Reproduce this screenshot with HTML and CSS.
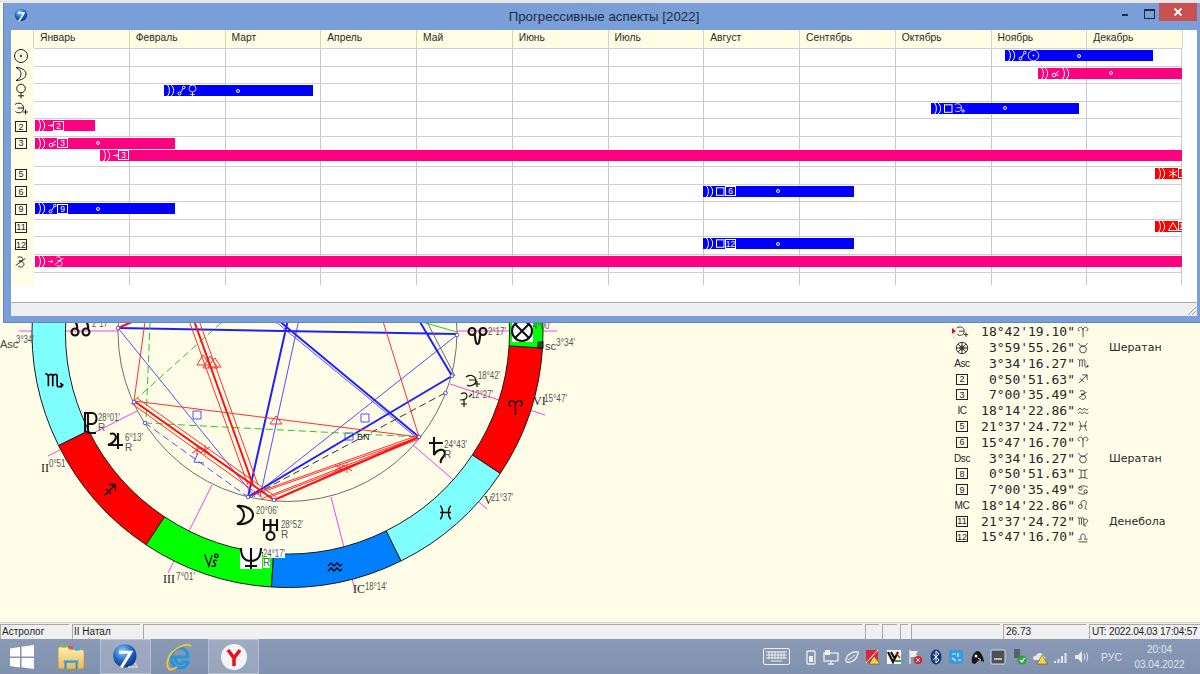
FILE: index.html
```html
<!DOCTYPE html>
<html lang="ru">
<head>
<meta charset="utf-8">
<title>Прогрессивные аспекты</title>
<link rel="stylesheet" href="styles.css">
</head>
<body>
<svg class="defs" aria-hidden="true">
  <defs>
    <radialGradient id="ball" cx="40%" cy="30%" r="75%"><stop offset="0" stop-color="#8fd0ff"/><stop offset=".55" stop-color="#1f66c4"/><stop offset="1" stop-color="#0b2f78"/></radialGradient>
    <linearGradient id="folder" x1="0" y1="0" x2="0" y2="1"><stop offset="0" stop-color="#fff0b0"/><stop offset="1" stop-color="#e8b85a"/></linearGradient>
    <symbol id="sun" viewBox="0 0 16 16"><circle cx="8" cy="8" r="6.5"/><circle cx="8" cy="8" r=".8" class="solid"/></symbol>
    <symbol id="moon" viewBox="0 0 16 16"><path d="M3 1.5C9 1.5 13 4.500 13 8C13 11.500 9 14.500 3 14.500C6.500 13 8 10.500 8 8C8 5.500 6.500 3 3 1.500Z"/></symbol>
    <symbol id="venus" viewBox="0 0 16 16"><circle cx="8" cy="5.500" r="4.300"/><path d="M8 9.800V15.500M5 12.800H11"/></symbol>
    <symbol id="fort" viewBox="0 0 16 16"><path d="M2 3.500C5 1 10.500 2 10.500 7C10.500 12 5 13 2.500 10.500M4.500 7H10.500M12.500 8.500V13.500M10 11H15"/></symbol>
    <symbol id="lil" viewBox="0 0 16 16"><path d="M4 3C6 1.500 9.500 2 10 4C10 6 7.500 7 5.500 7C9.500 7 12.500 9 11 12C9.500 14.500 6 14 4.500 12.500M2 12L13 4"/></symbol>
    <symbol id="wheel" viewBox="0 0 16 16"><circle cx="8" cy="8" r="6.500"/><circle cx="8" cy="8" r="2.500"/><path d="M8 1.500V14.500M1.500 8H14.500M3.500 3.500L12.500 12.500M12.500 3.500L3.500 12.500"/></symbol>
    <symbol id="aries" viewBox="0 0 16 16"><path d="M8 15V6C8 3 6 1.500 4.500 1.500C3 1.500 1.500 2.800 1.500 4.500C1.500 6 3 6.800 4 6M8 6C8 3 10 1.500 11.500 1.500C13 1.500 14.500 2.800 14.500 4.500C14.500 6 13 6.800 12 6"/></symbol>
    <symbol id="taurus" viewBox="0 0 16 16"><circle cx="8" cy="10" r="4.500"/><path d="M2 1.500C4 5 6 5.500 8 5.500C10 5.500 12 5 14 1.500"/></symbol>
    <symbol id="gemini" viewBox="0 0 16 16"><path d="M2 2C6 3.500 10 3.500 14 2M2 14C6 12.500 10 12.500 14 14M5.500 3V13M10.500 3V13"/></symbol>
    <symbol id="cancer" viewBox="0 0 16 16"><circle cx="4.500" cy="6" r="2.200"/><circle cx="11.500" cy="10" r="2.200"/><path d="M2.500 5C4 2 11 1.500 14.500 4.500M13.500 11C12 14 5 14.500 1.500 11.500"/></symbol>
    <symbol id="leo" viewBox="0 0 16 16"><circle cx="4.500" cy="10" r="2.500"/><path d="M6.500 9C4 4 6 2 9 2C13 2 13 6 11.500 9C10.500 11.500 10 14 13.500 13.500"/></symbol>
    <symbol id="virgo" viewBox="0 0 16 16"><path d="M1 3C3 3 3 4 3 6V13M3 5C4 3 6 3 6 5V13M6 5C7 3 9 3 9 5V11C9 13 10 15 12 15M9 7C12 4 15 6 14 9C13 11 10 12 8 14"/></symbol>
    <symbol id="libra" viewBox="0 0 16 16"><path d="M2 14.500H14M2 11H6C4 8 5 4 8 4C11 4 12 8 10 11H14"/></symbol>
    <symbol id="scorpio" viewBox="0 0 16 16"><path d="M1 3C3 3 3.500 4 3.500 6V13M3.500 5C4.500 3 7 3 7 5V13M7 5C8 3 10.500 3 10.500 5V11.500C10.500 14 12 14 15 12M13 10.500L15 12L13.500 14"/></symbol>
    <symbol id="sag" viewBox="0 0 16 16"><path d="M2.500 13.500L13.500 2.500M7 2.500H13.500V9M4 7L9 12"/></symbol>
    <symbol id="capr" viewBox="0 0 16 16"><path d="M1.500 3L5.500 14L8.500 4M13 9C10 8 9 10 11 11.500C13 13 11 15.500 8 14"/><circle cx="12.500" cy="4.500" r="1.700"/></symbol>
    <symbol id="aqua" viewBox="0 0 16 16"><path d="M1 7L4 4L7 7L10 4L13 7L15 5M1 12L4 9L7 12L10 9L13 12L15 10"/></symbol>
    <symbol id="pisces" viewBox="0 0 16 16"><path d="M3 1.500C6 5 6 11 3 14.500M13 1.500C10 5 10 11 13 14.500M3 8H13"/></symbol>
    <symbol id="mm" viewBox="0 0 10 11"><path d="M.5 0C3 2 3 9 .5 11M4 0C7.500 2 7.500 9 4 11"/></symbol>
    <symbol id="opp" viewBox="0 0 9 11"><circle cx="2.500" cy="8.500" r="1.500"/><circle cx="6.800" cy="2.500" r="1.300"/><path d="M3.500 7.500L6 3.500"/></symbol>
    <symbol id="semi" viewBox="0 0 5 11"><path d="M0 5.500H3"/><circle cx="3.800" cy="5.500" r=".9"/></symbol>
    <symbol id="cnj" viewBox="0 0 9 11"><circle cx="3" cy="7" r="1.800"/><path d="M4.500 5.500L8 3M5 7H7.500"/></symbol>
    <symbol id="sq" viewBox="0 0 9 11"><rect x=".5" y="1.800" width="7.500" height="7.500"/></symbol>
    <symbol id="sext" viewBox="0 0 10 11"><path d="M5 1V10M1 3L9 8M9 3L1 8"/></symbol>
    <symbol id="tri" viewBox="0 0 10 11"><path d="M5 1.500L9.500 9.500H.5Z"/></symbol>
    <symbol id="app" viewBox="0 0 24 24"><circle cx="11" cy="11" r="10" fill="url(#ball)" stroke="none"/><path d="M6 8H16L8 21" fill="none" stroke="#fff" stroke-width="2.600"/></symbol>
  </defs>
</svg>

<main class="desktop">
  <svg class="chart" viewBox="0 0 1200 622">
    <g class="cusps">
      <path d="M19 331H118M457 331H557"/>
      <path d="M48 456L137 411M168 573L212 485M355 590L331 497"/>
      <path d="M413 445L487 509M450 384L545 415"/>
    </g>
    <circle class="disc" cx="287.500" cy="332" r="169.500"/>
    <g class="ring">
      <path class="cy" d="M32.500 316A255.500 255.500 0 0 0 58.600 445.600L88.700 430.700A222 222 0 0 1 65.900 318.100Z"/>
      <path class="rd" d="M58.600 445.600A255.500 255.500 0 0 0 146.100 544.800L164.600 516.900A222 222 0 0 1 88.700 430.700Z"/>
      <path class="gr" d="M146.100 544.800A255.500 255.500 0 0 0 271.500 587L273.600 553.600A222 222 0 0 1 164.600 516.900Z"/>
      <path class="bl" d="M271.500 587A255.500 255.500 0 0 0 401.100 560.900L386.200 530.800A222 222 0 0 1 273.600 553.600Z"/>
      <path class="cy" d="M401.100 560.900A255.500 255.500 0 0 0 500.300 473.400L472.400 454.900A222 222 0 0 1 386.200 530.800Z"/>
      <path class="rd" d="M500.300 473.400A255.500 255.500 0 0 0 542.500 348L509.100 345.900A222 222 0 0 1 472.400 454.900Z"/>
      <path class="gr" d="M542.500 348A255.500 255.500 0 0 0 516.300 218.400L486.300 233.300A222 222 0 0 1 509.100 345.900Z"/>
    </g>
    <g class="aspects">
      <g class="th blue">
        <path d="M118 328L255 497M457 335L252 497M270 317L417 438M300 315L260 497"/>
        <path d="M193 411h8v8h-8zM361 414h8v8h-8zM345 433h8v7h-8zM198 453L194 462L204 463"/>
      </g>
      <g class="tk blue"><path d="M118 328L457 334M452 376L248 497M272 315L419 437M289 315L248 497M420 322L452 376"/></g>
      <path class="th blue dash" d="M145 423L248 497"/>
      <path class="th green dash" d="M145 423L419 437M134 401L222 322M150 322L146 423"/>
      <path class="th green" d="M422 322L457 332"/>
      <path class="th black dash" d="M445 393L250 497"/>
      <path class="th grey" d="M427 322L455 376"/>
      <g class="th red">
        <path d="M134 401L419 437M134 401L145 322M381 315L419 437M187 315L248 485M197 315L258 485M137 398L276 497M131 403L262 497"/>
        <path d="M419 435L258 492M419 439L270 497M419 437L248 497M419 437L261 499"/>
        <path d="M203 355L210 365H197ZM210 356L218 368H203ZM215 358L221 367H208ZM276 416L282 424H270Z"/>
        <path d="M197 445V455M192 447L202 453M202 447L192 453M205 445V455M200 447L210 453M210 447L200 453M340 463V473M335 465L345 471M345 465L335 471M347 463V473M342 465L352 471M352 465L342 471"/>
      </g>
      <g class="tk red"><path d="M134 401L274 500M192 315L253 485M419 437L274 500M118 328L132 322"/></g>
    </g>
    <g class="nodes">
      <circle cx="118" cy="328" r="1.800"/><circle cx="134" cy="402" r="1.800"/><circle cx="145" cy="423" r="1.800"/><circle cx="248" cy="497" r="1.800"/><circle cx="274" cy="500" r="1.800"/><circle cx="419" cy="437" r="1.800"/><circle cx="445.500" cy="393" r="1.800"/><circle cx="452" cy="376" r="1.800"/><circle cx="457" cy="335" r="1.800"/>
    </g>
    <rect class="white" x="512" y="320" width="21" height="22"/>
    <rect class="white" x="240" y="547" width="22" height="22"/>
    <rect class="white" x="263" y="549" width="22" height="9"/>
    <rect class="white" x="263" y="559" width="7" height="9"/>
    <rect class="mark" x="538" y="342" width="5" height="6"/>
    <g class="glyph">
      <use href="#scorpio" x="44" y="370" width="20" height="20"/>
      <use href="#sag" x="102" y="482" width="16" height="16"/>
      <use href="#capr" x="203" y="551" width="17" height="17"/>
      <use href="#aqua" x="327" y="559" width="16" height="16"/>
      <use href="#pisces" x="437" y="504" width="17" height="17"/>
      <use href="#aries" x="506" y="399" width="19" height="17"/>
    </g>
    <g class="planet">
      <circle cx="75" cy="332" r="3.500"/><path d="M77 329C78 326 76 323 75 320"/>
      <circle cx="86" cy="332" r="3.500"/><path d="M88 329C89 326 87 323 86 320"/>
      <circle cx="472" cy="331.500" r="3.500"/><circle cx="483" cy="331.500" r="3.500"/><path d="M474.500 334C476 340 475 344 477.500 344C480 344 479 340 480.500 334"/>
      <circle cx="522" cy="331" r="10"/><path d="M515 324L529 338M529 324L515 338"/>
      <path d="M84 413H92C98 413 98 424 92 424H88M88 413V433H96M85 413V432"/>
      <path d="M110 434C115 432 118 437 114 441C113 443 111 444 108 445H123M118 433V449"/>
      <path d="M237 506C247 505 253 510 253 515C253 520 247 525 237 524C242 522 244 518 244 515C244 512 242 508 237 506Z"/>
      <path d="M264 519V531M277 519V531M264 525H277M270.500 519V532"/><circle cx="270.500" cy="536" r="4"/>
      <path d="M241 548C241 557 245 561 251 561C257 561 261 557 261 548M251 548V569M245 566H257"/>
      <path d="M429 443H443M434 437V455C437 449 444 448 445 453C445 457 439 459 441 463"/>
    </g>
    <g class="planet thin">
      <path d="M466 377C469 374 475 375 476 380C476 385 470 387 467 385M469 380H476M477 381V387M474 384H480"/>
      <path d="M461 394C464 392 467 393 467 396C467 399 463 400 460 400M464 400V407M461 404H467M469 397L472 394"/>
    </g>
    <g class="deg">
      <text x="0" y="348" class="big">Asc</text><text x="16" y="343" textLength="18" lengthAdjust="spacingAndGlyphs">3°34'</text>
      <text x="92" y="327" textLength="17" lengthAdjust="spacingAndGlyphs">2°17'</text>
      <text x="488" y="335" textLength="18" lengthAdjust="spacingAndGlyphs">2°17'</text>
      <text x="533" y="329" textLength="18" lengthAdjust="spacingAndGlyphs">4°00'</text>
      <text x="545" y="350" class="big">sc</text><text x="556" y="346" textLength="19" lengthAdjust="spacingAndGlyphs">3°34'</text>
      <text x="98" y="421" textLength="22" lengthAdjust="spacingAndGlyphs">28°01'</text><text x="98" y="431">R</text>
      <text x="125" y="441" textLength="18" lengthAdjust="spacingAndGlyphs">6°13'</text><text x="125" y="451">R</text>
      <text x="41" y="472" class="rom">II</text><text x="49" y="467" textLength="18" lengthAdjust="spacingAndGlyphs">0°51'</text>
      <text x="163" y="583" class="rom">III</text><text x="176" y="580" textLength="19" lengthAdjust="spacingAndGlyphs">7°01'</text>
      <text x="353" y="593" class="rom">IC</text><text x="365" y="590" textLength="22" lengthAdjust="spacingAndGlyphs">18°14'</text>
      <text x="256" y="514" textLength="22" lengthAdjust="spacingAndGlyphs">20°06'</text>
      <text x="281" y="528" textLength="22" lengthAdjust="spacingAndGlyphs">28°52'</text><text x="281" y="538">R</text>
      <text x="263" y="557" textLength="22" lengthAdjust="spacingAndGlyphs">24°17'</text><text x="263" y="566">R</text>
      <text x="478" y="379" textLength="22" lengthAdjust="spacingAndGlyphs">18°42'</text>
      <text x="471" y="398" textLength="22" lengthAdjust="spacingAndGlyphs">12°27'</text>
      <text x="533" y="405" class="rom">VI</text><text x="544" y="402" textLength="23" lengthAdjust="spacingAndGlyphs">15°47'</text>
      <text x="484" y="504" class="rom">V</text><text x="491" y="501" textLength="22" lengthAdjust="spacingAndGlyphs">21°37'</text>
      <text x="444" y="448" textLength="23" lengthAdjust="spacingAndGlyphs">24°43'</text><text x="444" y="458">R</text>
      <text x="357" y="440" class="dark">BN</text>
    </g>
  </svg>

  <div class="strip"></div>

  <section class="positions">
    <div class="pos"><span class="pi"><i class="tick"></i><svg class="ico s14"><use href="#fort"/></svg></span><span class="dg">18°42'19.10"</span><svg class="ico s12"><use href="#aries"/></svg><span class="star"></span></div>
    <div class="pos"><span class="pi"><svg class="ico s14"><use href="#wheel"/></svg></span><span class="dg">3°59'55.26"</span><svg class="ico s12"><use href="#taurus"/></svg><span class="star">Шератан</span></div>
    <div class="pos"><span class="pi nar">Asc</span><span class="dg">3°34'16.27"</span><svg class="ico s12"><use href="#scorpio"/></svg><span class="star"></span></div>
    <div class="pos"><span class="pi"><b class="hs">2</b></span><span class="dg">0°50'51.63"</span><svg class="ico s12"><use href="#sag"/></svg><span class="star"></span></div>
    <div class="pos"><span class="pi"><b class="hs">3</b></span><span class="dg">7°00'35.49"</span><svg class="ico s12"><use href="#lil"/></svg><span class="star"></span></div>
    <div class="pos"><span class="pi nar">IC</span><span class="dg">18°14'22.86"</span><svg class="ico s12"><use href="#aqua"/></svg><span class="star"></span></div>
    <div class="pos"><span class="pi"><b class="hs">5</b></span><span class="dg">21°37'24.72"</span><svg class="ico s12"><use href="#pisces"/></svg><span class="star"></span></div>
    <div class="pos"><span class="pi"><b class="hs">6</b></span><span class="dg">15°47'16.70"</span><svg class="ico s12"><use href="#aries"/></svg><span class="star"></span></div>
    <div class="pos"><span class="pi nar">Dsc</span><span class="dg">3°34'16.27"</span><svg class="ico s12"><use href="#taurus"/></svg><span class="star">Шератан</span></div>
    <div class="pos"><span class="pi"><b class="hs">8</b></span><span class="dg">0°50'51.63"</span><svg class="ico s12"><use href="#gemini"/></svg><span class="star"></span></div>
    <div class="pos"><span class="pi"><b class="hs">9</b></span><span class="dg">7°00'35.49"</span><svg class="ico s12"><use href="#cancer"/></svg><span class="star"></span></div>
    <div class="pos"><span class="pi nar">MC</span><span class="dg">18°14'22.86"</span><svg class="ico s12"><use href="#leo"/></svg><span class="star"></span></div>
    <div class="pos"><span class="pi"><b class="hs">11</b></span><span class="dg">21°37'24.72"</span><svg class="ico s12"><use href="#virgo"/></svg><span class="star">Денебола</span></div>
    <div class="pos"><span class="pi"><b class="hs">12</b></span><span class="dg">15°47'16.70"</span><svg class="ico s12"><use href="#libra"/></svg><span class="star"></span></div>
  </section>

  <section class="window">
    <header class="titlebar">
      <svg class="appicon"><use href="#app"/></svg>
      <h1 class="wtitle">Прогрессивные аспекты [2022]</h1>
      <div class="wbtns">
        <span class="wmin"></span>
        <span class="wmax"></span>
        <span class="wclose"><svg class="x" viewBox="0 0 10 10"><path d="M1.500 1.500L8.500 8.500M8.500 1.500L1.500 8.500"/></svg></span>
      </div>
    </header>
    <div class="wbody">
      <div class="grid">
        <div class="head">
          <span class="corner"></span>
          <span class="mon">Январь</span><span class="mon">Февраль</span><span class="mon">Март</span><span class="mon">Апрель</span><span class="mon">Май</span><span class="mon">Июнь</span><span class="mon">Июль</span><span class="mon">Август</span><span class="mon">Сентябрь</span><span class="mon">Октябрь</span><span class="mon">Ноябрь</span><span class="mon">Декабрь</span>
        </div>
        <div class="row"><span class="lab"><svg class="ico s16"><use href="#sun"/></svg></span><div class="track">
          <div class="bar b" style="left:971px;width:148px"><svg class="ico g10"><use href="#mm"/></svg><svg class="ico g9"><use href="#opp"/></svg><svg class="ico g13"><use href="#sun"/></svg><i class="dot" style="left:72px"></i></div>
        </div></div>
        <div class="row"><span class="lab"><svg class="ico s16"><use href="#moon"/></svg></span><div class="track">
          <div class="bar p" style="left:1004px;width:144px"><svg class="ico g10"><use href="#mm"/></svg><svg class="ico g9"><use href="#cnj"/></svg><svg class="ico g10 mlx"><use href="#mm"/></svg><i class="dot" style="left:71px"></i></div>
        </div></div>
        <div class="row"><span class="lab"><svg class="ico s16"><use href="#venus"/></svg></span><div class="track">
          <div class="bar b" style="left:130px;width:149px"><svg class="ico g10"><use href="#mm"/></svg><svg class="ico g9"><use href="#opp"/></svg><svg class="ico g13"><use href="#venus"/></svg><i class="dot" style="left:72px"></i></div>
        </div></div>
        <div class="row"><span class="lab"><svg class="ico s16"><use href="#fort"/></svg></span><div class="track">
          <div class="bar b" style="left:897px;width:148px"><svg class="ico g10"><use href="#mm"/></svg><svg class="ico g9"><use href="#sq"/></svg><svg class="ico g13"><use href="#fort"/></svg><i class="dot" style="left:72px"></i></div>
        </div></div>
        <div class="row"><span class="lab"><b class="hs">2</b></span><div class="track">
          <div class="bar p" style="left:1px;width:60px"><svg class="ico g10"><use href="#mm"/></svg><svg class="ico g5"><use href="#semi"/></svg><b class="hb">2</b></div>
        </div></div>
        <div class="row tall"><span class="lab"><b class="hs">3</b></span><div class="track">
          <div class="bar p" style="left:1px;width:140px"><svg class="ico g10"><use href="#mm"/></svg><svg class="ico g9"><use href="#cnj"/></svg><b class="hb">3</b><i class="dot" style="left:61px"></i></div>
          <div class="bar p low" style="left:66px;width:1082px"><svg class="ico g10"><use href="#mm"/></svg><svg class="ico g5"><use href="#semi"/></svg><b class="hb">3</b></div>
        </div></div>
        <div class="row"><span class="lab"><b class="hs">5</b></span><div class="track">
          <div class="bar r" style="left:1121px;width:27px"><svg class="ico g10"><use href="#mm"/></svg><svg class="ico g10"><use href="#sext"/></svg><b class="hb">5</b></div>
        </div></div>
        <div class="row"><span class="lab"><b class="hs">6</b></span><div class="track">
          <div class="bar b" style="left:669px;width:151px"><svg class="ico g10"><use href="#mm"/></svg><svg class="ico g9"><use href="#sq"/></svg><b class="hb">6</b><i class="dot" style="left:73px"></i></div>
        </div></div>
        <div class="row"><span class="lab"><b class="hs">9</b></span><div class="track">
          <div class="bar b" style="left:1px;width:140px"><svg class="ico g10"><use href="#mm"/></svg><svg class="ico g9"><use href="#opp"/></svg><b class="hb">9</b><i class="dot" style="left:61px"></i></div>
        </div></div>
        <div class="row"><span class="lab"><b class="hs">11</b></span><div class="track">
          <div class="bar r" style="left:1121px;width:27px"><svg class="ico g10"><use href="#mm"/></svg><svg class="ico g10"><use href="#tri"/></svg><b class="hb">11</b></div>
        </div></div>
        <div class="row"><span class="lab"><b class="hs">12</b></span><div class="track">
          <div class="bar b" style="left:669px;width:151px"><svg class="ico g10"><use href="#mm"/></svg><svg class="ico g9"><use href="#sq"/></svg><b class="hb">12</b><i class="dot" style="left:73px"></i></div>
        </div></div>
        <div class="row"><span class="lab"><svg class="ico s14"><use href="#lil"/></svg></span><div class="track">
          <div class="bar p" style="left:1px;width:1147px"><svg class="ico g10"><use href="#mm"/></svg><svg class="ico g5"><use href="#semi"/></svg><svg class="ico g13"><use href="#lil"/></svg></div>
        </div></div>
        <div class="row last"><span class="lab"></span><div class="track"></div></div>
      </div>
      <div class="wstatus"><span class="grip"></span></div>
    </div>
  </section>
</main>

<footer class="statusbar">
  <span class="cell c1">Астролог</span>
  <span class="cell c2">II Натал</span>
  <span class="cell c3"></span>
  <span class="cell c4"></span>
  <span class="cell c5"></span>
  <span class="cell c6"></span>
  <span class="cell c7"></span>
  <span class="cell c8">26.73</span>
  <span class="cell c9">UT: 2022.04.03 17:04:57</span>
</footer>

<nav class="taskbar">
  <span class="start"><svg class="win" viewBox="0 0 24 24"><path d="M0 3.500L10 2V11.500H0ZM11.500 1.800L24 0V11.500H11.500ZM0 13H10V22.500L0 21ZM11.500 13H24V24L11.500 22.300Z"/></svg></span>
  <span class="task"><svg class="tk-ico" viewBox="0 0 32 28"><path d="M1 6C1 4 2 3 4 3H11L14 6H26C28 6 29 7 29 9V24C29 26 28 27 26 27H4C2 27 1 26 1 24Z" fill="url(#folder)" stroke="#b9923f" stroke-width=".8"/><rect x="5" y="1" width="5" height="3" fill="#7bc043"/><rect x="12" y="2" width="5" height="3" fill="#d9534f"/><rect x="19" y="4" width="6" height="3" fill="#48a6e0"/><path d="M9 27V19H21V27" fill="none" stroke="#2a8ac8" stroke-width="2"/><path d="M7 19H23" stroke="#3aa0e0" stroke-width="2.500"/></svg></span>
  <span class="task on"><svg class="tk-ico big" viewBox="0 0 28 28"><use href="#app"/><path d="M16 24H25L23 20" fill="none" stroke="#cfd6e2" stroke-width="1.500"/></svg></span>
  <span class="task"><svg class="tk-ico big" viewBox="0 0 28 28"><path d="M7 14H22C22 8 18 5 14 5C9 5 5 9 5 15C5 21 9 25 14 25C18 25 21 23 22 19H17C16 21 15 21 14 21C11 21 9 18 9 14" fill="none" stroke="#2296e0" stroke-width="3"/><path d="M25 3C22 0 12 3 6 9C1 15 0 23 3 26C5 27 8 26 11 24" fill="none" stroke="#f3c230" stroke-width="2"/></svg></span>
  <span class="task on"><svg class="tk-ico big" viewBox="0 0 28 28"><circle cx="14" cy="14" r="13" fill="#f4f4f4"/><path d="M8 7L14 15L20 7M14 15V23" fill="none" stroke="#e8121f" stroke-width="3.500"/></svg></span>
  <span class="spring"></span>
  <svg class="kbd" viewBox="0 0 27 17"><rect x=".5" y=".5" width="26" height="16" rx="1.500"/><path d="M3 4H24M3 7H24M3 10H24M6 3V11M9 3V11M12 3V11M15 3V11M18 3V11M21 3V11M8 13H19"/></svg>
  <div class="tray">
    <svg class="ti" viewBox="0 0 16 16"><rect x="4" y="2" width="8" height="13" rx="1" fill="none" stroke="#eee" stroke-width="1.300"/><rect x="6" y="7" width="4" height="6" fill="#eee"/></svg>
    <svg class="ti" viewBox="0 0 16 16"><rect x="1" y="4" width="14" height="8" fill="none" stroke="#eee" stroke-width="1.300"/><path d="M8 12V15M5 15H11" stroke="#eee" stroke-width="1.300"/><rect x="2" y="1" width="5" height="5" fill="#eee"/></svg>
    <svg class="ti" viewBox="0 0 16 16"><path d="M2 12C2 6 8 2 14 3C14 9 9 14 3 13Z" fill="none" stroke="#e8e8e8" stroke-width="1.500"/><path d="M4 11L11 6" stroke="#e8e8e8"/></svg>
    <svg class="ti" viewBox="0 0 16 16"><path d="M1 1H13V14H1Z" fill="#d9283c"/><path d="M1 14L13 1" stroke="#fff"/><path d="M9 7L15 15H4Z" fill="#f6d33c" stroke="#444" stroke-width=".5"/></svg>
    <svg class="ti" viewBox="0 0 16 16"><rect x="1" y="1" width="14" height="14" fill="#fff"/><path d="M2 3L7 13L12 3M5 3L9 10" fill="none" stroke="#111" stroke-width="2.200"/><path d="M9 12H15" stroke="#2a2" stroke-width="2"/><path d="M10 4L14 9" stroke="#c22" stroke-width="1.500"/></svg>
    <svg class="ti" viewBox="0 0 16 16"><path d="M3 1V15" stroke="#eee" stroke-width="1.300"/><path d="M3 2H11L9 5L11 8H3Z" fill="#eee"/><circle cx="11" cy="11" r="4" fill="#d8202a"/><path d="M9 9L13 13M13 9L9 13" stroke="#fff"/></svg>
    <svg class="ti" viewBox="0 0 16 16"><ellipse cx="8" cy="8" rx="5.500" ry="7.500" fill="#0e3a82"/><path d="M5 5L11 11L8 14V2L11 5L5 11" fill="none" stroke="#fff"/></svg>
    <svg class="ti" viewBox="0 0 16 16"><rect x="1" y="1" width="14" height="14" rx="2" fill="#3a9bd8"/><path d="M4 5H8M10 4V8M4 9L8 12M10 11H13" stroke="#d8f0ff" stroke-width="1.200"/></svg>
    <svg class="ti" viewBox="0 0 16 16"><path d="M3 14C2 8 5 2 9 2C12 3 15 9 15 13L10 11L6 15Z" fill="#161616"/><circle cx="7" cy="7" r="1.500" fill="#eee"/><path d="M9 9L12 11" stroke="#eee"/></svg>
    <svg class="ti" viewBox="0 0 16 16"><rect x="1" y="1" width="14" height="14" rx="1" fill="#4a4f58" stroke="#ddd"/><path d="M4 10H12" stroke="#ddd" stroke-width="1.500"/></svg>
    <svg class="ti" viewBox="0 0 16 16"><rect x="3" y="0" width="6" height="9" fill="#5a5f68"/><circle cx="11" cy="11" r="4.500" fill="#28a53c"/><path d="M9 11L11 13L13.500 9" fill="none" stroke="#fff" stroke-width="1.300"/></svg>
    <svg class="ti" viewBox="0 0 16 16"><path d="M2 11C0 9 2 6 4 7C5 3 11 3 11 7C14 7 14 11 12 11Z" fill="#e8e8e8"/><path d="M10 6L15.500 15H5Z" fill="#f6d33c" stroke="#444" stroke-width=".5"/></svg>
    <svg class="ti" viewBox="0 0 16 16"><path d="M1 14V12H3V14ZM4.500 14V10H6.500V14ZM8 14V7H10V14ZM11.500 14V4H13.500V14Z" fill="#e8e8e8"/></svg>
    <svg class="ti" viewBox="0 0 16 16"><path d="M1 6H4L8 2V14L4 10H1Z" fill="#e8e8e8"/><path d="M10 5C11 7 11 9 10 11M12.500 3.500C14 6 14 10 12.500 12.500" fill="none" stroke="#e8e8e8"/></svg>
  </div>
  <span class="lang">РУС</span>
  <span class="clock"><span>20:04</span><span>03.04.2022</span></span>
</nav>
</body>
</html>
```

FILE: styles.css
```css
* { box-sizing: border-box; margin: 0; padding: 0; }
html, body { width: 1200px; height: 674px; overflow: hidden; }
body { display: flex; flex-direction: column; font-family: "Liberation Sans", Arial, sans-serif; color: #222; background: #fffde8; }
.defs { position: absolute; width: 0; height: 0; overflow: hidden; }

.desktop { position: relative; height: 622px; flex: none; display: flex; justify-content: flex-end; padding: 324px 20px 0 0; background: #fffde8; }

/* chart canvas */
.chart { position: absolute; left: 0; top: 0; width: 1200px; height: 622px; fill: none; }
.cusps { stroke: #ff40e0; stroke-width: 1; }
.disc { stroke: #6e6e6e; stroke-width: 1; }
.ring path { stroke: #1c1c1c; stroke-width: 1; }
.ring .cy { fill: #80ffff; }
.ring .rd { fill: #ff0000; }
.ring .gr { fill: #00ff00; }
.ring .bl { fill: #0080ff; }
.th { stroke-width: 1; }
.tk { stroke-width: 2; }
.blue { stroke: #2020ff; }
.th.blue { stroke: #5050ff; }
.red { stroke: #ff1010; }
.th.red { stroke: #ff3030; }
.green { stroke: #28c828; }
.black { stroke: #333; }
.grey { stroke: #666; }
.dash { stroke-dasharray: 7 4; }
.nodes { fill: #fffde8; stroke: #3030ff; stroke-width: .8; }
.white { fill: #fff; }
.mark { fill: #0b5c0b; stroke: #111; stroke-width: 1; }
.glyph { color: #000; stroke: #000; stroke-width: 1.300; }
.planet { stroke: #111; stroke-width: 2.100; }
.planet.thin { stroke-width: 1.200; }
.deg { fill: #555; font-family: "Liberation Sans", sans-serif; font-size: 10px; stroke: none; }
.deg .big { font-size: 11px; fill: #444; }
.deg .rom { font-family: "Liberation Serif", serif; font-size: 12px; fill: #222; }
.deg .dark { fill: #222; font-size: 9px; }

.strip { position: absolute; left: 0; top: 0; width: 100%; height: 3px; background: #e6e6e6; }

/* positions table */
.positions { position: relative; width: 230px; display: flex; flex-direction: column; }
.pos { display: grid; grid-template-columns: 24px 101px 20px 1fr; align-items: center; height: 15.770px; }
.pi { position: relative; display: flex; justify-content: center; align-items: center; font: 10px "Liberation Sans", sans-serif; color: #222; }
.nar { letter-spacing: -.4px; }
.dg { font: 13px "DejaVu Sans Mono", monospace; text-align: right; color: #262626; }
.pos > svg { margin-left: 2px; }
.star { font: 11px "DejaVu Sans", sans-serif; padding-left: 14px; color: #2a2a2a; }
.tick { position: absolute; left: 2px; top: 3px; border-left: 4px solid #e8003c; border-top: 3.500px solid transparent; border-bottom: 3.500px solid transparent; }
.hs { display: flex; align-items: center; justify-content: center; width: 12px; height: 11px; border: 1px solid #222; font: 9px "Liberation Sans", sans-serif; color: #222; background: #fffde8; }
.ico { fill: none; stroke: currentColor; stroke-width: 1; color: #1c1c1c; flex: none; }
.ico .solid { fill: currentColor; }
.s12 { width: 12px; height: 12px; }
.s14 { width: 14px; height: 14px; }
.s16 { width: 16px; height: 16px; }

/* floating window */
.window { position: absolute; left: 3px; top: 3px; width: 1197px; height: 320px; display: flex; flex-direction: column; background: #7a9fd8; border-left: 1px solid #5f87c2; border-bottom: 1px solid #5f87c2; padding: 0 3px 6px 7px; }
.titlebar { position: relative; flex: none; height: 27px; display: flex; align-items: center; justify-content: center; }
.appicon { position: absolute; left: 3px; top: 5px; width: 15px; height: 15px; }
.wtitle { font: 400 13.300px "Liberation Sans", sans-serif; color: #1d2c44; }
.wbtns { position: absolute; right: 0; top: 0; display: flex; align-items: stretch; height: 18px; }
.wmin { width: 22px; position: relative; }
.wmin::after { content: ""; position: absolute; left: 0; top: 11px; width: 6px; height: 2px; background: #1d2c44; }
.wmax { width: 15px; position: relative; }
.wmax::after { content: ""; position: absolute; left: 0; top: 6px; width: 9px; height: 7px; border: 1px solid #1d2c44; border-top-width: 2px; }
.wclose { width: 38px; background: #c75050; display: flex; align-items: center; justify-content: center; }
.x { width: 10px; height: 10px; fill: none; stroke: #fff; stroke-width: 1.800; }
.wbody { flex: 1; display: flex; flex-direction: column; background: #fff; }
.grid { flex: 1; }
.wstatus { flex: none; position: relative; height: 14px; background: #efefef; border-top: 1px solid #aaa; }
.grip { position: absolute; right: 1px; bottom: 1px; width: 10px; height: 10px; background: repeating-linear-gradient(135deg, transparent 0 2px, #9a9a9a 2px 3px); clip-path: polygon(100% 0, 100% 100%, 0 100%); }

.head { display: grid; grid-template-columns: 23px repeat(12, 95.750px); width: 1172px; height: 18px; background: #fffde4; }
.corner { border-right: 1px solid #d4d4c4; }
.mon { font-size: 10.300px; line-height: 16px; padding-left: 6px; border-right: 1px solid #d4d4c4; color: #2a2a2a; }
.row { display: grid; grid-template-columns: 23px 1148px; height: 17.600px; }
.row.tall { height: 30px; }
.row.last { height: 13px; }
.lab { display: flex; align-items: center; justify-content: center; background: #fffde4; padding: 0 3px 1px 0; }
.row.tall .lab { align-items: flex-start; padding-top: 2px; }
.track { position: relative; overflow: hidden; border-top: 1px solid #cfcfcf; background: repeating-linear-gradient(90deg, #c8c8c8 0 1px, transparent 1px 95.750px) -1px 0; }
.row.last .track { background-position: -1px 0; }

.bar { position: absolute; top: 1px; height: 11px; display: flex; align-items: center; overflow: hidden; padding-left: 3px; color: #fff; }
.bar.low { top: 13px; }
.bar.b { background: #0000ff; }
.bar.p { background: #ff0080; }
.bar.r { background: #ff0000; }
.bar .ico { color: #fff; stroke-width: 1; }
.g5 { width: 5px; height: 11px; }
.g9 { width: 9px; height: 11px; }
.g10 { width: 10px; height: 11px; }
.g13 { width: 13px; height: 13px; }
.mlx { margin-left: 2px; }
.hb { flex: none; display: flex; align-items: center; justify-content: center; width: 11px; height: 10px; border: 1px solid #fff; font: 8.500px "Liberation Sans", sans-serif; color: #fff; }
.dot { position: absolute; top: 3.500px; width: 4px; height: 4px; border: 1px solid #fff; border-radius: 50%; }

/* status bar */
.statusbar { flex: none; height: 17px; display: flex; gap: 3px; background: #f0f0f0; border-top: 1px solid #d8d8d8; padding-top: 1px; }
.cell { height: 16px; border-top: 1px solid #a8a8a8; border-left: 1px solid #a8a8a8; font-size: 10px; line-height: 14px; padding-left: 1px; color: #222; white-space: nowrap; }
.c1 { width: 69px; }
.c2 { width: 68px; }
.c3 { width: 719px; }
.c4 { width: 14px; }
.c5 { width: 15px; }
.c6 { width: 8px; }
.c7 { width: 89px; }
.c8 { width: 83px; padding-left: 2px; }
.c9 { width: 111px; padding-left: 2px; letter-spacing: -.18px; }

/* taskbar */
.taskbar { flex: none; height: 35px; display: flex; align-items: stretch; gap: 3px; background: linear-gradient(#8a9ab6, #8091ae); }
.start { width: 43px; display: flex; align-items: center; justify-content: center; }
.win { width: 24px; height: 24px; fill: #fff; }
.task { width: 51px; display: flex; align-items: center; justify-content: center; border: 1px solid transparent; }
.task.on { background: rgba(255, 255, 255, .18); border-color: rgba(255, 255, 255, .28); }
.tk-ico { width: 30px; height: 26px; }
.tk-ico.big { width: 28px; height: 28px; }
.spring { flex: 1; }
.kbd { align-self: center; width: 27px; height: 17px; fill: none; stroke: #f0f0f0; stroke-width: 1; margin-right: 10px; }
.tray { display: flex; align-items: center; gap: 4.850px; margin-right: 8.500px; }
.ti { width: 16px; height: 16px; flex: none; }
.lang { align-self: center; width: 22px; font-size: 10.500px; color: #dfe5ef; margin-right: 2.500px; }
.clock { align-self: center; width: 62px; display: flex; flex-direction: column; align-items: center; font-size: 10px; line-height: 15px; color: #dfe5ef; margin-right: 9.500px; }
```
